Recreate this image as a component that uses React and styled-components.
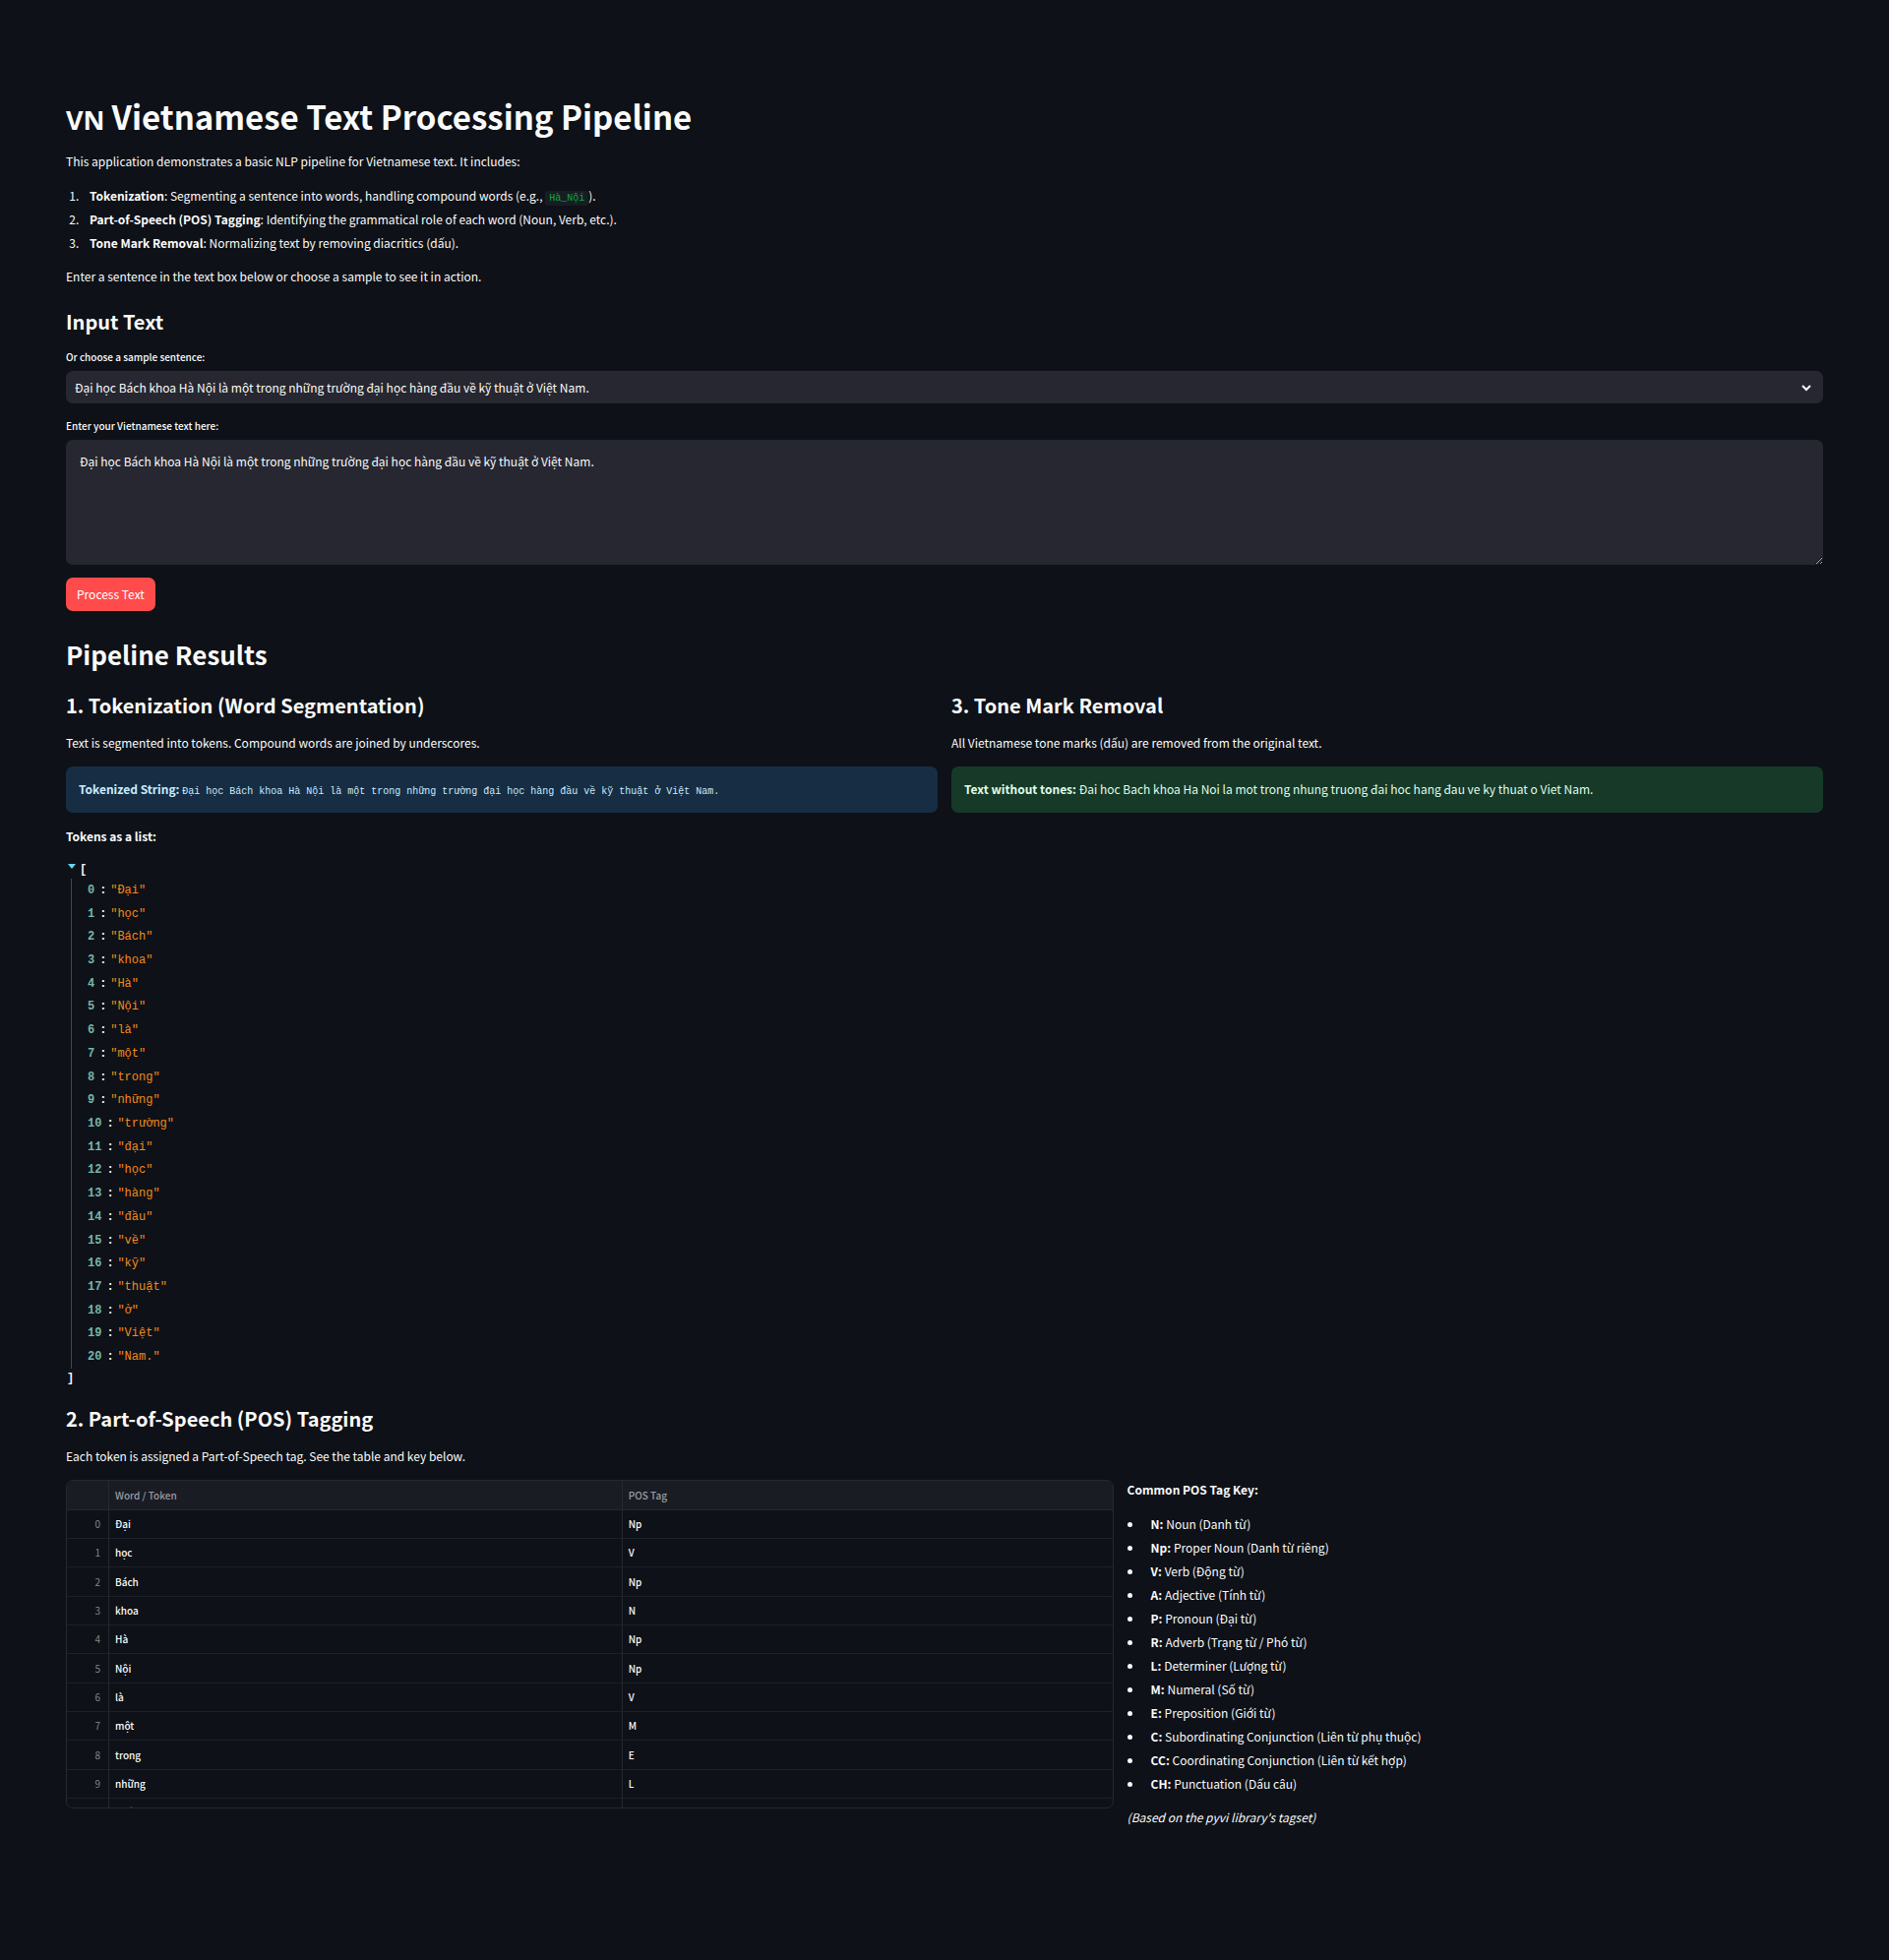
import React, { useState } from "react";
import styled, { createGlobalStyle } from "styled-components";

const SANS = `"Noto Sans CJK SC", "Noto Sans", sans-serif`;
const MONO = `"Liberation Mono", monospace`;

const GlobalStyle = createGlobalStyle`
  *, *::before, *::after { box-sizing: border-box; }
  body { margin: 0; background: #0e1117; color: #fafafa; font: 400 12px/24px ${SANS}; }
  h1, h2, h3, p, ul, ol { margin: 0; }
  strong { font-weight: 700; }
`;

const Page = styled.main`
  padding: 96px 67px 127px;
`;
const Title = styled.h1`
  display: flex;
  align-items: baseline;
  gap: 7px;
  font-size: 33px;
  line-height: 44px;
  font-weight: 700;
`;
const Flag = styled.span`
  font-family: "Noto Sans", sans-serif;
  font-size: 27px;
  line-height: 32px;
  font-weight: 700;
`;
const Heading = styled.h2`
  font-size: 26px;
  line-height: 36px;
  font-weight: 600;
  margin-top: 26px;
`;
const Subheading = styled.h3`
  font-size: 20px;
  line-height: 28px;
  font-weight: 600;
  margin-top: ${(p) => p.$top || 20}px;
`;
const Text = styled.p`
  margin-top: ${(p) => p.$top || 12}px;
  font-style: ${(p) => (p.$italic ? "italic" : "normal")};
`;
const Steps = styled.ol`
  margin-top: 11px;
  padding-left: 16px;
  li { padding-left: 8px; }
`;
const Code = styled.code`
  font: 400 10px/12px ${MONO};
  color: #09ab3b;
  background: #1a1c24;
  border-radius: 3px;
  padding: 2px 4px;
`;
const Fields = styled.div`
  display: grid;
  gap: 15px;
  margin-top: 14px;
`;
const Label = styled.label`
  display: block;
  font-size: 10px;
  line-height: 16px;
  font-weight: 500;
  margin-bottom: 6px;
`;
const SelectBox = styled.div`
  position: relative;
  display: flex;
  svg {
    position: absolute;
    right: 12px;
    top: 12px;
    pointer-events: none;
  }
`;
const Select = styled.select`
  appearance: none;
  width: 100%;
  height: 33px;
  padding: 0 32px 0 9px;
  border: 0;
  border-radius: 7px;
  background: #262730;
  color: inherit;
  font: inherit;
`;
const TextArea = styled.textarea`
  display: block;
  width: 100%;
  height: 127px;
  padding: 10px 14px;
  border: 0;
  border-radius: 7px;
  background: #262730;
  color: inherit;
  font: inherit;
  resize: vertical;
`;
const Button = styled.button`
  display: block;
  height: 34px;
  margin-top: 13px;
  padding: 0 11px;
  border: 0;
  border-radius: 7px;
  background: #ff4b4b;
  color: #fff;
  font: inherit;
`;
const Columns = styled.div`
  display: grid;
  grid-template-columns: calc(${(p) => p.$split} - 7px) minmax(0, 1fr);
  gap: 14px;
  align-items: start;
  margin-top: ${(p) => p.$top || 0}px;
`;
const Alert = styled.div`
  margin-top: 12px;
  padding: 11px 13px 12px;
  border-radius: 7px;
  background: ${(p) => (p.$success ? "#173928" : "#172d43")};
  color: ${(p) => (p.$success ? "#dffde9" : "#c7ebff")};
  code { font: 400 10px/12px ${MONO}; }
`;
const Tree = styled.div`
  margin-top: 13px;
  font: 400 12px/18px ${MONO};
`;
const TreeToggle = styled.button`
  display: flex;
  align-items: flex-start;
  gap: 4px;
  height: 18px;
  padding: 0 0 0 2px;
  border: 0;
  background: none;
  color: #f9f8f5;
  font: inherit;
  font-weight: 700;
  svg { margin-top: 3px; }
`;
const TreeList = styled.ul`
  display: grid;
  grid-auto-rows: 1fr;
  align-items: center;
  height: 498px;
  margin-left: 5px;
  padding: 0 0 0 16px;
  border-left: 1px solid #49483e;
  list-style: none;
`;
const TreeItem = styled.li`
  display: flex;
  color: #f08a1c;
`;
const TreeIndex = styled.span`
  color: #76b5ac;
  font-weight: 700;
`;
const Colon = styled.span`
  width: 16px;
  padding-left: 5px;
  color: #f9f8f5;
  font-weight: 700;
`;
const TreeEnd = styled.div`
  padding: 1px 0 0 1px;
  height: 20px;
  color: #f9f8f5;
  font-weight: 700;
`;
const TableFrame = styled.div`
  height: 334px;
  margin-top: 2px;
  overflow: hidden;
  border: 1px solid #26282f;
  border-radius: 7px;
`;
const Table = styled.table`
  width: 100%;
  table-layout: fixed;
  border-collapse: separate;
  border-spacing: 0;
  font-size: 10px;
  line-height: 16px;
  th, td {
    height: 29px;
    padding: 0 6px;
    text-align: left;
    font-weight: 500;
    border-bottom: 1px solid #1d2027;
    border-right: 1px solid #26282f;
  }
  th:last-child, td:last-child { border-right: 0; }
  tr:nth-child(3n) td { height: 30px; }
  thead th {
    height: 30px;
    background: #1a1c24;
    color: #9c9da3;
    border-bottom-color: #26282f;
  }
  tbody th {
    padding-right: 8px;
    text-align: right;
    color: #83858b;
    font-weight: 400;
  }
`;
const IndexColumn = styled.col`
  width: 43px;
`;
const WordColumn = styled.col`
  width: 49.1%;
`;
const TagList = styled.ul`
  margin-top: 11px;
  padding-left: 16px;
  li { padding-left: 8px; }
`;

const SENTENCE =
  "Đại học Bách khoa Hà Nội là một trong những trường đại học hàng đầu về kỹ thuật ở Việt Nam.";
const TAGS = ["Np", "V", "Np", "N", "Np", "Np", "V", "M", "E", "L", "N"];
const KEY = [
  ["N", "Noun (Danh từ)"],
  ["Np", "Proper Noun (Danh từ riêng)"],
  ["V", "Verb (Động từ)"],
  ["A", "Adjective (Tính từ)"],
  ["P", "Pronoun (Đại từ)"],
  ["R", "Adverb (Trạng từ / Phó từ)"],
  ["L", "Determiner (Lượng từ)"],
  ["M", "Numeral (Số từ)"],
  ["E", "Preposition (Giới từ)"],
  ["C", "Subordinating Conjunction (Liên từ phụ thuộc)"],
  ["CC", "Coordinating Conjunction (Liên từ kết hợp)"],
  ["CH", "Punctuation (Dấu câu)"],
];

export default function App() {
  const [text, setText] = useState(SENTENCE);
  const tokens = SENTENCE.split(" ");
  return (
    <Page>
      <GlobalStyle />
      <Title>
        <Flag>VN</Flag>
        <span>Vietnamese Text Processing Pipeline</span>
      </Title>
      <Text>This application demonstrates a basic NLP pipeline for Vietnamese text. It includes:</Text>
      <Steps>
        <li>
          <strong>Tokenization</strong>: Segmenting a sentence into words, handling compound words (e.g.,{" "}
          <Code>Hà_Nội</Code>).
        </li>
        <li>
          <strong>Part-of-Speech (POS) Tagging</strong>: Identifying the grammatical role of each word (Noun,
          Verb, etc.).
        </li>
        <li>
          <strong>Tone Mark Removal</strong>: Normalizing text by removing diacritics (dấu).
        </li>
      </Steps>
      <Text $top={10}>Enter a sentence in the text box below or choose a sample to see it in action.</Text>

      <Subheading>Input Text</Subheading>
      <Fields>
        <div>
          <Label htmlFor="sample">Or choose a sample sentence:</Label>
          <SelectBox>
            <Select id="sample" value={SENTENCE} onChange={(e) => setText(e.target.value)}>
              <option>{SENTENCE}</option>
            </Select>
            <svg width="10" height="10" viewBox="0 0 10 10" fill="none" stroke="#fafafa" strokeWidth="2">
              <path d="M1 3l4 4 4-4" />
            </svg>
          </SelectBox>
        </div>
        <div>
          <Label htmlFor="source">Enter your Vietnamese text here:</Label>
          <TextArea id="source" value={text} onChange={(e) => setText(e.target.value)} />
        </div>
      </Fields>
      <Button type="button">Process Text</Button>

      <Heading>Pipeline Results</Heading>
      <Columns $split="50%">
        <section>
          <Subheading>1. Tokenization (Word Segmentation)</Subheading>
          <Text>Text is segmented into tokens. Compound words are joined by underscores.</Text>
          <Alert>
            <strong>Tokenized String:</strong> <code>{SENTENCE}</code>
          </Alert>
          <Text>
            <strong>Tokens as a list:</strong>
          </Text>
          <Tree>
            <TreeToggle type="button" aria-label="Collapse list">
              <svg width="8" height="5" viewBox="0 0 8 5" fill="#66d9ef">
                <path d="M0 0h8L4 5z" />
              </svg>
              [
            </TreeToggle>
            <TreeList>
              {tokens.map((token, i) => (
                <TreeItem key={i}>
                  <TreeIndex>{i}</TreeIndex>
                  <Colon>:</Colon>
                  <span>"{token}"</span>
                </TreeItem>
              ))}
            </TreeList>
            <TreeEnd>]</TreeEnd>
          </Tree>
        </section>
        <section>
          <Subheading>3. Tone Mark Removal</Subheading>
          <Text>All Vietnamese tone marks (dấu) are removed from the original text.</Text>
          <Alert $success>
            <strong>Text without tones:</strong> Đai hoc Bach khoa Ha Noi la mot trong nhung truong đai hoc hang
            đau ve ky thuat o Viet Nam.
          </Alert>
        </section>
      </Columns>

      <Subheading $top={17}>2. Part-of-Speech (POS) Tagging</Subheading>
      <Text>Each token is assigned a Part-of-Speech tag. See the table and key below.</Text>
      <Columns $split="60%" $top={10}>
        <TableFrame>
          <Table>
            <colgroup>
              <IndexColumn />
              <WordColumn />
              <col />
            </colgroup>
            <thead>
              <tr>
                <th aria-label="Index" />
                <th scope="col">Word / Token</th>
                <th scope="col">POS Tag</th>
              </tr>
            </thead>
            <tbody>
              {TAGS.map((tag, i) => (
                <tr key={i}>
                  <th scope="row">{i}</th>
                  <td>{tokens[i]}</td>
                  <td>{tag}</td>
                </tr>
              ))}
            </tbody>
          </Table>
        </TableFrame>
        <aside>
          <p>
            <strong>Common POS Tag Key:</strong>
          </p>
          <TagList>
            {KEY.map(([tag, meaning]) => (
              <li key={tag}>
                <strong>{tag}:</strong> {meaning}
              </li>
            ))}
          </TagList>
          <Text $top={10} $italic>
            (Based on the pyvi library's tagset)
          </Text>
        </aside>
      </Columns>
    </Page>
  );
}
